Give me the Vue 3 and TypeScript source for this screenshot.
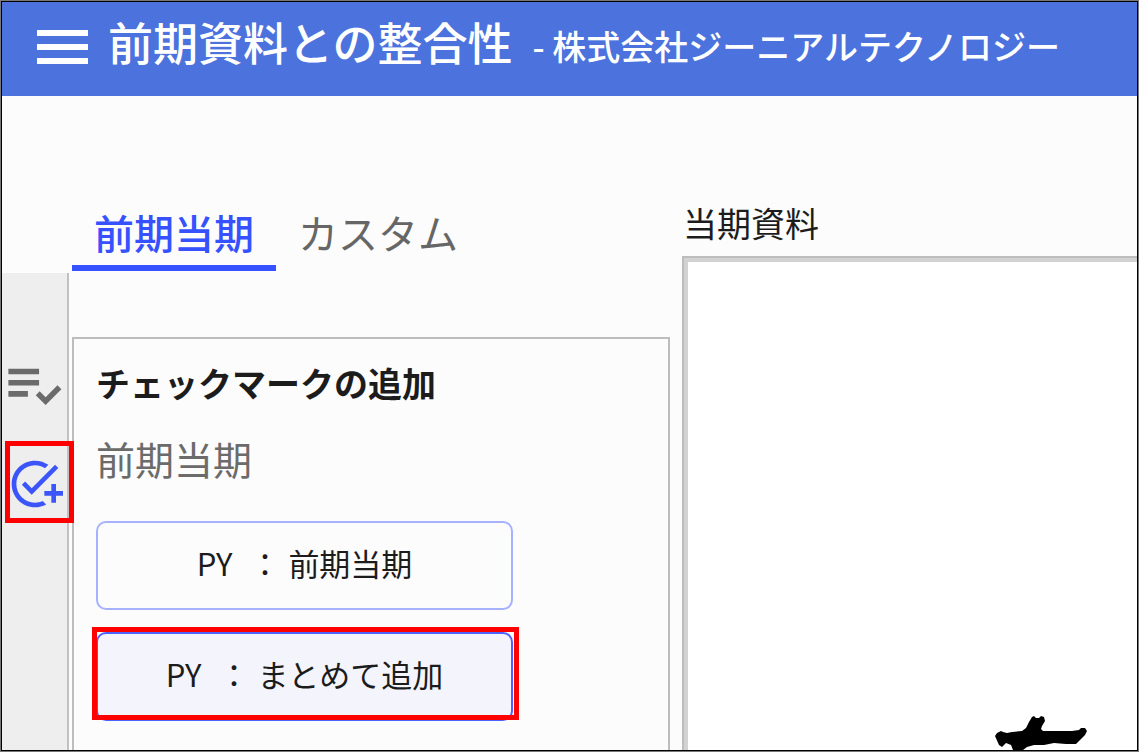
<script setup lang="ts">
import { ref } from 'vue'

interface Mark {
  code: string
  label: string
}

const tabs: string[] = ['前期当期', 'カスタム']
const activeTab = ref<string>(tabs[0])

const marks: Mark[] = [
  { code: 'PY', label: '前期当期' },
  { code: 'PY', label: 'まとめて追加' },
]
const selectedMark = ref<string>(marks[1].label)
</script>

<template>
  <div class="app">
    <header class="topbar">
      <button class="menu" type="button" aria-label="メニュー">
        <span class="bar"></span>
        <span class="bar"></span>
        <span class="bar"></span>
      </button>
      <h1 class="title">前期資料との整合性</h1>
      <p class="company">- 株式会社ジーニアルテクノロジー</p>
    </header>

    <div class="body">
      <nav class="rail" aria-label="ツール">
        <button class="tool list" type="button" aria-label="チェック一覧">
          <svg viewBox="0 0 24 24" class="icon-list" aria-hidden="true">
            <path d="M3 10h11v2H3zm0-4h11v2H3zm0 8h7v2H3zm17.59-2.07l-4.25 4.24-2.12-2.12-1.41 1.41L16.34 19 22 13.34z" />
          </svg>
        </button>
        <button class="tool add callout" type="button" aria-label="チェックマークの追加">
          <svg viewBox="0 0 24 24" class="icon-add" aria-hidden="true">
            <path d="M22 5.18L10.59 16.6l-4.24-4.24 1.41-1.41 2.83 2.83 10-10L22 5.18zM12 20c-4.41 0-8-3.59-8-8s3.59-8 8-8c1.57 0 3.04.46 4.28 1.25l1.45-1.45C16.1 2.67 14.13 2 12 2 6.48 2 2 6.48 2 12s4.48 10 10 10c1.73 0 3.36-.44 4.78-1.22l-1.5-1.5c-1 .46-2.11.72-3.28.72zm7-5h-3v2h3v3h2v-3h3v-2h-3v-3h-2v3z" />
          </svg>
        </button>
      </nav>

      <section class="side">
        <div class="tabs" role="tablist">
          <button
            v-for="tab in tabs"
            :key="tab"
            class="tab"
            :class="{ active: tab === activeTab }"
            type="button"
            role="tab"
            :aria-selected="tab === activeTab"
            @click="activeTab = tab"
          >{{ tab }}</button>
        </div>
        <div class="panel">
          <h2 class="heading">チェックマークの追加</h2>
          <p class="group">前期当期</p>
          <div class="marks">
            <button
              v-for="mark in marks"
              :key="mark.label"
              class="mark"
              :class="{ selected: mark.label === selectedMark }"
              type="button"
              @click="selectedMark = mark.label"
            >
              <span class="code">{{ mark.code }}</span>
              <span class="colon">：</span>
              <span>{{ mark.label }}</span>
            </button>
          </div>
        </div>
      </section>

      <section class="viewer">
        <h2 class="viewer-title">当期資料</h2>
        <div class="sheet">
          <svg class="ink" viewBox="0 0 94 36" aria-hidden="true">
            <path d="M1 22L3 19L7 17L9 18L13 19L18 18L28 17L32 14L35 8L38 3L40 2L42 4L45 4L47 2L50 3L51 7L48 12L47 15L49 17L62 17L78 17L85 16L87 14L91 14L93 17L91 21L86 26L82 30L72 30L60 29L50 31L40 31L33 33L29 36L19 36L17 31L12 29L8 33L5 31Z" />
          </svg>
        </div>
      </section>
    </div>
  </div>
</template>

<style>
body {
  margin: 0;
}
</style>

<style scoped>
.app {
  box-sizing: border-box;
  display: flex;
  flex-direction: column;
  height: 100vh;
  overflow: hidden;
  padding: 1px;
  border: 1px solid #777;
  background: #000;
  color: #1c1c1c;
  font-family: "Noto Sans CJK JP", "Noto Sans", sans-serif;
}

button {
  margin: 0;
  padding: 0;
  border: 0;
  background: none;
  color: inherit;
  font: inherit;
  cursor: pointer;
}

h1,
h2,
p {
  margin: 0;
  font-weight: 400;
  white-space: nowrap;
}

.topbar {
  box-sizing: border-box;
  display: flex;
  flex: none;
  align-items: center;
  height: 94px;
  padding: 0 0 4px 35px;
  background: #4c72dd;
  color: #fff;
}

.menu {
  display: flex;
  flex-direction: column;
  gap: 8px;
  width: 51px;
  margin-right: 20px;
}

.bar {
  height: 6px;
  background: #fff;
}

.title {
  margin-right: 20px;
  padding-bottom: 10px;
  font-size: 45px;
  font-weight: 500;
  line-height: 60px;
}

.company {
  padding-bottom: 2px;
  font-size: 34px;
  font-weight: 500;
  line-height: 60px;
}

.body {
  display: flex;
  flex: 1;
  min-height: 0;
  background: #fcfcfc;
}

.rail {
  display: flex;
  flex: none;
  flex-direction: column;
  box-sizing: border-box;
  width: 67px;
  margin-top: 177px;
  padding-top: 79px;
  border-right: 2px solid #c1c1c1;
  background: #eee;
}

.tool {
  display: flex;
  align-items: center;
}

.list {
  height: 66px;
  margin-bottom: 23px;
  color: #6b6b6b;
}

.tool svg {
  flex: none;
  fill: currentColor;
}

.icon-list {
  width: 67px;
  height: 67px;
  margin-left: -2px;
}

.add {
  box-sizing: border-box;
  z-index: 1;
  width: 69px;
  height: 82px;
  margin-left: 3px;
  padding: 4px 0 0 2px;
  color: #3b55fb;
}

.icon-add {
  width: 56px;
  height: 56px;
}

.callout,
.mark.selected {
  position: relative;
}

.callout::after,
.mark.selected::after {
  content: "";
  position: absolute;
  inset: 0;
  border: 5px solid #f00;
}

.side {
  display: flex;
  flex: none;
  flex-direction: column;
  box-sizing: border-box;
  width: 601px;
  padding: 108px 0 0 3px;
}

.tabs {
  display: flex;
  flex: none;
}

.tab {
  padding: 0 22px 4px;
  border-bottom: 6px solid transparent;
  color: #666;
  font-size: 40px;
  line-height: 57px;
}

.tab.active {
  border-bottom-color: #3651ff;
  color: #3651ff;
  font-weight: 500;
}

.panel {
  flex: 1;
  margin-top: 66px;
  padding: 19px 22px 0;
  border: 2px solid #bdbdbd;
  border-bottom: 0;
}

.heading {
  font-size: 34px;
  font-weight: 700;
  line-height: 50px;
}

.group {
  margin-top: 25px;
  color: #6b6b6b;
  font-size: 39px;
  line-height: 50px;
}

.marks {
  display: flex;
  flex-direction: column;
  gap: 22px;
  width: 417px;
  margin-top: 38px;
}

.mark {
  box-sizing: border-box;
  display: flex;
  align-items: center;
  justify-content: center;
  height: 89px;
  padding-bottom: 5px;
  border: 2px solid #a6b2ff;
  border-radius: 10px;
  font-size: 31px;
  line-height: 50px;
}

.code {
  margin-right: 17px;
}

.colon {
  margin-right: 8px;
}

.mark.selected {
  border-color: #4a63ff;
  background: #f4f5fc;
}

.mark.selected::after {
  inset: -7px -8px -1px -6px;
}

.viewer {
  display: flex;
  flex: 1;
  flex-direction: column;
  min-width: 0;
  margin-left: 12px;
  padding-top: 102px;
}

.viewer-title {
  padding-left: 1px;
  font-size: 34px;
  line-height: 50px;
}

.sheet {
  position: relative;
  flex: 1;
  margin-top: 8px;
  border: solid #bdbdbd;
  border-width: 2px 0 0 2px;
  background: #fff;
  box-shadow: inset 4px 4px #d2d2d2;
}

.ink {
  position: absolute;
  right: 49px;
  bottom: 0;
  width: 94px;
  height: 36px;
  fill: #000;
}
</style>
